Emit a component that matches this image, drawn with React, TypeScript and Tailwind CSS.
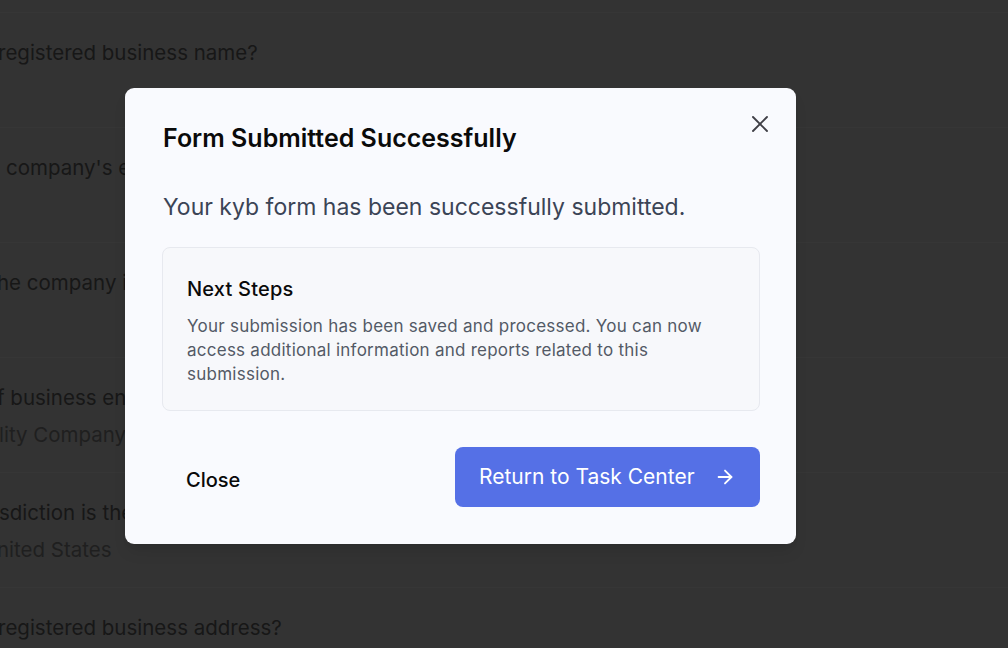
import React from "react";
import { X, ArrowRight } from "lucide-react";

const font = { fontFamily: "Inter, 'Noto Sans', sans-serif" };

function Block({ q, a, qx = 0, ax = 0 }: { q: string; a?: string; qx?: number; ax?: number }) {
  return (
    <div className="h-[115px] border-t border-[#363636] flex flex-col">
      <div className="h-[28px]" />
      <div className="text-[20.5px] leading-[24px] text-[#171717] whitespace-nowrap" style={{ marginLeft: qx }}>
        {q}
      </div>
      {a ? (
        <div className="mt-[13px] text-[20.5px] leading-[24px] text-[#1f1f1f] whitespace-nowrap" style={{ marginLeft: ax }}>
          {a}
        </div>
      ) : null}
    </div>
  );
}

export default function App() {
  return (
    <div className="relative w-[1008px] h-[648px] overflow-hidden bg-[#333333]" style={font}>
      <div className="flex flex-col pt-[12px]">
        <Block q="registered business name?" qx={-2} />
        <Block q="company's email address?" qx={6} />
        <Block q="he company incorporated?" qx={-3} />
        <Block q="f business entity?" a="lity Company" qx={-3} ax={-1} />
        <Block q="sdiction is the company in?" a="nited States" qx={-1} ax={-3} />
        <Block q="registered business address?" qx={-2} />
      </div>

      <div className="absolute left-[125px] top-[88px] w-[671px] rounded-[9px] bg-[#f9fafe] pl-[37px] pr-[36px] pt-[34px] pb-[37px] shadow-lg">
        <div className="absolute right-[22px] top-[22px] text-[#3f3f46]">
          <X size={28} strokeWidth={1.6} />
        </div>
        <h2 className="text-[25px] leading-[32px] font-semibold text-[#0a0a0a] pl-[1px]">
          Form Submitted Successfully
        </h2>
        <p className="mt-[38px] text-[23px] leading-[30px] text-[#3b4456] pl-[1px]">
          Your kyb form has been successfully submitted.
        </p>
        <div className="mt-[25px] rounded-[8px] border border-[#e7e9ef] bg-[#f7f8fb] pl-[24px] pr-[24px] pt-[27px] pb-[24px]">
          <div className="text-[20px] leading-[28px] font-medium tracking-[0.2px] text-[#0a0a0a]">Next Steps</div>
          <p className="mt-[11px] text-[17px] leading-[24px] tracking-[0.25px] text-[#535a66]">
            Your submission has been saved and processed. You can now access additional information and reports related to this submission.
          </p>
        </div>
        <div className="mt-[36px] flex items-center justify-between">
          <button className="pl-[24px] pt-[5px] text-[20px] leading-[28px] font-medium text-[#0a0a0a]">Close</button>
          <button className="h-[60px] w-[305px] rounded-[8px] bg-[#5570e6] flex items-center pl-[24px] text-white text-[21px] leading-[28px]">
            <span>Return to Task Center</span>
            <ArrowRight size={22} strokeWidth={2} className="ml-[19px]" />
          </button>
        </div>
      </div>
    </div>
  );
}
